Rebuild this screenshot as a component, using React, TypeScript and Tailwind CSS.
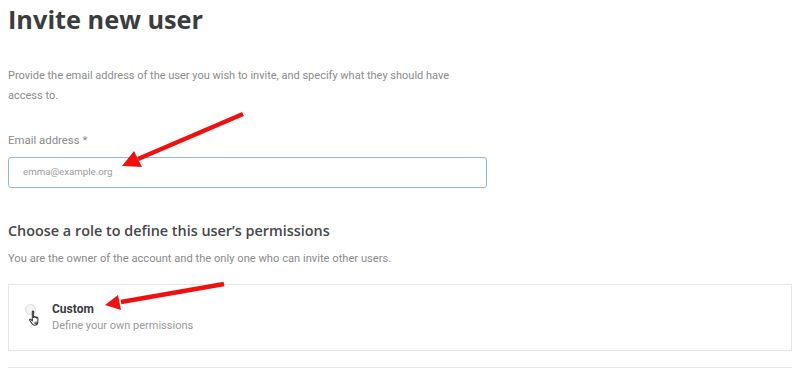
export default function App() {
  return (
    <div className="relative h-[377px] w-[800px] overflow-hidden bg-white font-['Roboto',sans-serif]">
      <div className="px-2">
        <h1 className="pt-[1px] font-['Open_Sans',sans-serif] text-[25.3px] font-bold leading-[36px] text-[#3b3c40]">
          Invite new user
        </h1>
        <p className="mt-[29px] max-w-[462px] text-[11px] leading-[20px] text-[#8b8b8b]">
          Provide the email address of the user you wish to invite, and specify what they should have access to.
        </p>
        <label className="mt-[25px] block text-[11.4px] leading-[18px] text-[#8b8b8b]">Email address *</label>
        <div className="mt-[8px] flex h-[31px] w-[479px] items-center rounded-[3px] border border-[#8db8e6] px-[14px]">
          <span className="text-[9.7px] text-[#9a9a9a]">emma@example.org</span>
        </div>
        <h2 className="mt-[32px] font-['Open_Sans',sans-serif] text-[14.4px] font-semibold leading-[22px] text-[#46474b]">
          Choose a role to define this user’s permissions
        </h2>
        <p className="mt-[8px] text-[11.17px] leading-[18px] text-[#8b8b8b]">
          You are the owner of the account and the only one who can invite other users.
        </p>
        <div className="mt-[16px] flex h-[67px] w-[784px] items-start gap-[16px] border border-[#e6e6e6] px-[16px] pt-[16px]">
          <div className="relative mt-[3px] h-[11px] w-[11px] shrink-0 rounded-full border border-[#dcdcdc] bg-[#f4f4f4]">
            <svg className="absolute left-[2px] top-[5px]" width="15" height="17" viewBox="0 0 14 16">
              <path
                d="M4 1.5c0-.8 1.2-.8 1.2 0V7l.4-.2c0-.8 1.2-.8 1.2 0v.3c0-.8 1.2-.8 1.2 0v.4c0-.8 1.2-.8 1.2 0v3.5c0 1.8-1.2 3.3-3 3.3H6c-1 0-1.7-.6-2.2-1.4L1.5 9.6c-.4-.7.4-1.3 1-.8L4 10.2z"
                fill="#fff"
                stroke="#333"
                strokeWidth="1"
                strokeLinejoin="round"
              />
              <path d="M6 11.5h3M6 12.8h3" stroke="#333" strokeWidth="0.8" />
            </svg>
          </div>
          <div>
            <div className="text-[12px] font-bold leading-[16px] text-[#3b3c40]">Custom</div>
            <div className="mt-[1px] text-[11px] leading-[16px] text-[#9a9a9a]">Define your own permissions</div>
          </div>
        </div>
        <div className="mt-[16px] h-[1px] w-[784px] bg-[#e6e6e6]" />
      </div>

      <svg className="pointer-events-none absolute left-0 top-0" width="800" height="377" viewBox="0 0 800 377">
        <line x1="243" y1="114" x2="138" y2="159" stroke="#f01010" strokeWidth="4.5" />
        <polygon points="122,166 134,151 142,167" fill="#f01010" />
        <line x1="224" y1="284" x2="121" y2="302" stroke="#f01010" strokeWidth="4.5" />
        <polygon points="105,305 118,295 121,310" fill="#f01010" />
      </svg>
    </div>
  );
}
